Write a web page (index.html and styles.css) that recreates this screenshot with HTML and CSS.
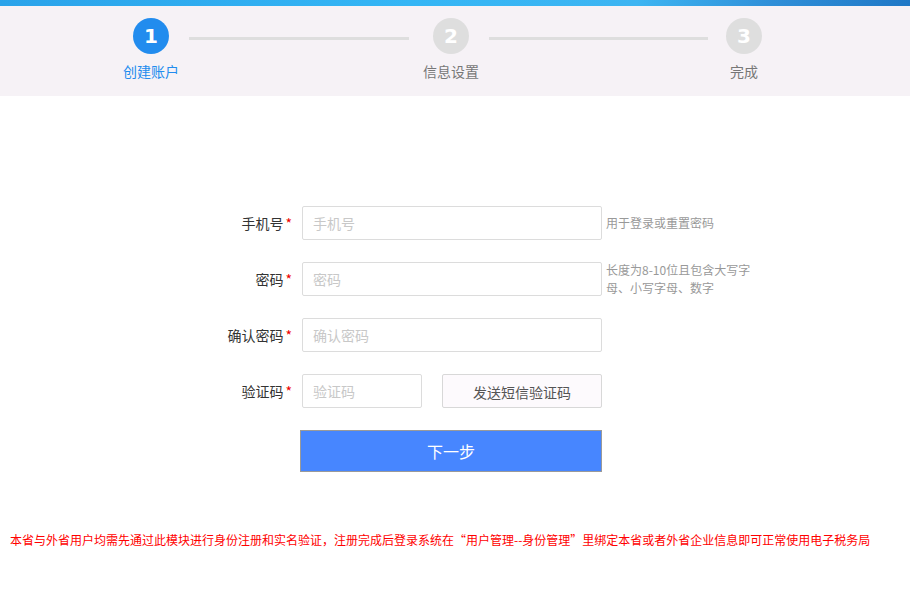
FILE: index.html
```html
<!DOCTYPE html>
<html lang="zh-CN">
<head>
    <meta charset="UTF-8" />
    <title>用户注册</title>
    <link rel="stylesheet" href="styles.css">
</head>
<body>
    <div class="banner"></div>
    <div class="steps">
        <div class="step active">
            <div class="circle">1</div>
            <div class="step-name">创建账户</div>
        </div>
        <div class="step-line"></div>
        <div class="step">
            <div class="circle">2</div>
            <div class="step-name">信息设置</div>
        </div>
        <div class="step-line"></div>
        <div class="step">
            <div class="circle">3</div>
            <div class="step-name">完成</div>
        </div>
    </div>

    <form class="reg-form">
        <div class="row">
            <label class="lbl">手机号<span class="req">*</span></label>
            <input class="field" type="text" placeholder="手机号">
            <div class="hint">用于登录或重置密码</div>
        </div>
        <div class="row">
            <label class="lbl">密码<span class="req">*</span></label>
            <input class="field" type="password" placeholder="密码">
            <div class="hint">长度为8-10位且包含大写字母、小写字母、数字</div>
        </div>
        <div class="row">
            <label class="lbl">确认密码<span class="req">*</span></label>
            <input class="field" type="password" placeholder="确认密码">
        </div>
        <div class="row">
            <label class="lbl">验证码<span class="req">*</span></label>
            <input class="field short" type="text" placeholder="验证码">
            <button class="sms-btn" type="button">发送短信验证码</button>
        </div>
        <div class="row submit-row">
            <button class="next-btn" type="button">下一步</button>
        </div>
    </form>

    <p class="notice">本省与外省用户均需先通过此模块进行身份注册和实名验证，注册完成后登录系统在“用户管理--身份管理”里绑定本省或者外省企业信息即可正常使用电子税务局</p>
</body>
</html>
```

FILE: styles.css
```css
body {
    margin: 0;
    background: #fff;
    font-family: "Noto Sans CJK SC", "Liberation Sans", sans-serif;
    font-size: 14px;
    color: #333;
}
.banner {
    height: 6px;
    background: linear-gradient(to right, #2aa3ea 0%, #34b6f5 45%, #3db5f2 70%, #2f8fd8 85%, #1f78c6 100%);
}
.steps {
    height: 90px;
    background-color: #f6f2f6;
    display: flex;
    align-items: flex-start;
    padding-left: 111px;
    box-sizing: border-box;
}
.step {
    width: 80px;
    display: flex;
    flex-direction: column;
    align-items: center;
    padding-top: 12px;
}
.circle {
    width: 36px;
    height: 36px;
    border-radius: 50%;
    background-color: #dedede;
    color: #fff;
    font-family: "DejaVu Sans", sans-serif;
    font-weight: bold;
    font-size: 20px;
    line-height: 36px;
    text-align: center;
}
.step-name {
    margin-top: 7px;
    color: #777;
    font-size: 14px;
    line-height: 20px;
}
.step.active .circle {
    background-color: #228cee;
}
.step.active .step-name {
    color: #228cee;
}
.step-line {
    width: 220px;
    height: 3px;
    background-color: #dedede;
    margin: 31px 0 0 -2px;
}
.step-line + .step {
    margin-left: 2px;
}
.step-line + .step + .step-line {
    width: 219px;
}
.step:last-child {
    margin-left: -4px;
}

.reg-form {
    padding-top: 110px;
}
.row {
    display: flex;
    align-items: center;
    height: 34px;
    margin-bottom: 22px;
}
.lbl {
    width: 302px;
    text-align: right;
    line-height: 34px;
    padding-right: 10px;
    box-sizing: border-box;
    color: #333;
}
.req {
    color: #e00;
    margin-left: 2px;
}
.field {
    width: 300px;
    height: 34px;
    box-sizing: border-box;
    border: 1px solid #dcdcdc;
    border-radius: 2px;
    padding: 0 10px;
    font-family: inherit;
    font-size: 14px;
    outline: none;
}
.field::placeholder {
    color: #c8c8c8;
}
.field.short {
    width: 120px;
}
.hint {
    width: 150px;
    margin-left: 4px;
    color: #999;
    font-size: 12px;
    line-height: 18px;
}
.sms-btn {
    width: 160px;
    height: 34px;
    margin-left: 20px;
    background-color: #fdfafd;
    border: 1px solid #d8d8d8;
    border-radius: 2px;
    color: #555;
    font-family: inherit;
    font-size: 14px;
    padding-top: 3px;
}
.submit-row {
    padding-left: 300px;
    height: 42px;
}
.next-btn {
    width: 302px;
    height: 42px;
    background-color: #4786ff;
    border: 1px solid #9a9a9a;
    color: #fff;
    font-family: inherit;
    font-size: 16px;
}
.notice {
    margin: 59px 0 0 10px;
    color: #f00;
    font-size: 12px;
    line-height: 18px;
}
```
